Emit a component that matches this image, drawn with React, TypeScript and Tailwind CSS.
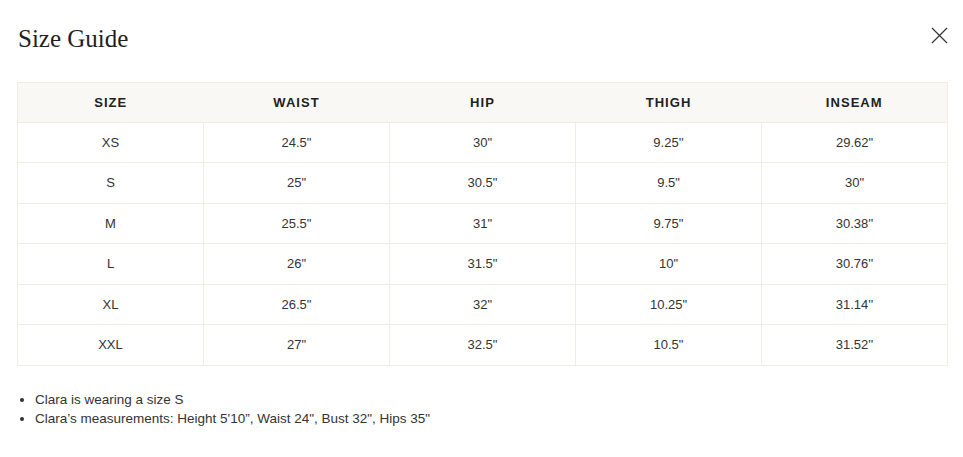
const headers = ["SIZE", "WAIST", "HIP", "THIGH", "INSEAM"];

const rows = [
  ["XS", "24.5\"", "30\"", "9.25''", "29.62\""],
  ["S", "25\"", "30.5\"", "9.5\"", "30\""],
  ["M", "25.5\"", "31\"", "9.75\"", "30.38''"],
  ["L", "26\"", "31.5\"", "10\"", "30.76''"],
  ["XL", "26.5\"", "32\"", "10.25\"", "31.14''"],
  ["XXL", "27\"", "32.5\"", "10.5\"", "31.52''"],
];

const App = () => {
  return (
    <div className="bg-white w-[963px] h-[457px] px-[17px] pt-[24px] font-['Liberation_Sans',Arial,sans-serif] text-[#2b2b2b]">
      <div className="flex justify-between items-start">
        <h1 className="ml-[1px] font-['Liberation_Serif',serif] text-[25px] leading-[30px] text-[#1f1f1f]">
          Size Guide
        </h1>
        <button className="mt-[3px] mr-[-2px] w-[17px] h-[17px] text-[#333]">
          <svg width="17" height="17" viewBox="0 0 17 17" fill="none" stroke="currentColor" strokeWidth="1.2">
            <path d="M1 1L16 16M16 1L1 16" />
          </svg>
        </button>
      </div>

      <table className="mt-[28px] w-[931px] border-collapse border border-[#f0ede4] table-fixed text-[13px]">
        <thead>
          <tr className="bg-[#f9f8f4] h-[40px]">
            {headers.map((h) => (
              <th key={h} className="font-bold tracking-[0.08em] text-[#222] text-center">
                {h}
              </th>
            ))}
          </tr>
        </thead>
        <tbody>
          {rows.map((row, i) => (
            <tr key={i} className={i % 2 === 0 ? "h-[40px]" : "h-[41px]"}>
              {row.map((cell, j) => (
                <td key={j} className="border border-[#f0ede4] text-center text-[#333]">
                  {cell}
                </td>
              ))}
            </tr>
          ))}
        </tbody>
      </table>

      <ul className="mt-[24px] pl-[18px] text-[13.5px] leading-[19px] text-[#333] list-disc">
        <li>Clara is wearing a size S</li>
        <li>Clara’s measurements: Height 5'10”, Waist 24", Bust 32", Hips 35"</li>
      </ul>
    </div>
  );
};

export default App;
